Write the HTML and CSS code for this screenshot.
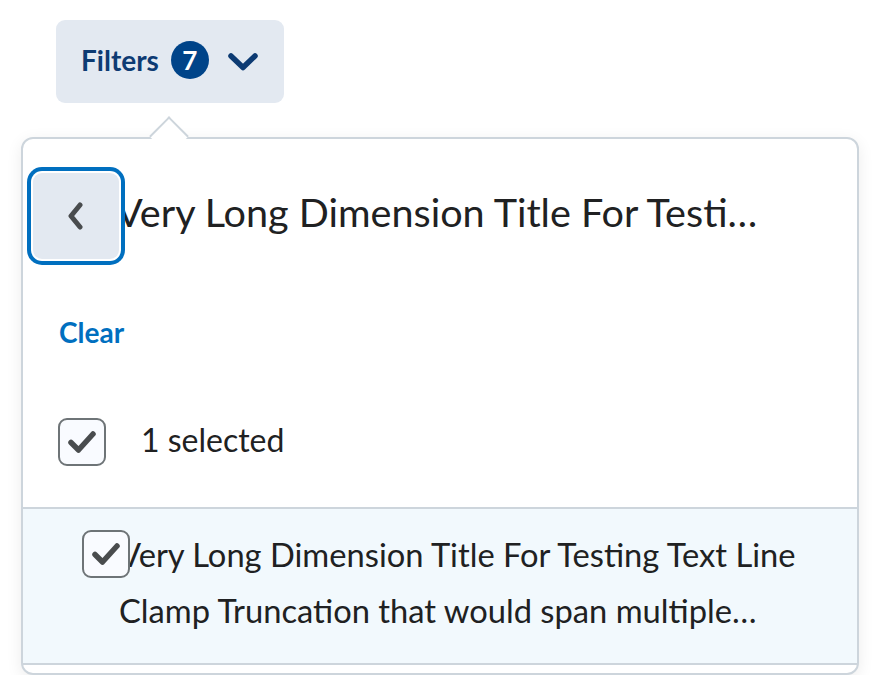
FILE: index.html
```html
<!DOCTYPE html>
<html>
<head>
<meta charset="utf-8">
<link rel="stylesheet" href="styles.css">
</head>
<body>
<div class="page">
  <button class="filters-btn" type="button">
    <span class="filters-label">Filters</span>
    <span class="badge">7</span>
    <svg class="chev-down" width="30" height="18" viewBox="0 0 30 18"><polyline points="3,3 15,14.5 27,3" fill="none" stroke="#0d3b73" stroke-width="5.5" stroke-linecap="round" stroke-linejoin="round"/></svg>
  </button>
  <div class="dropdown">
    <span class="pointer"></span>
    <div class="header">
      <button class="back" type="button">
        <svg width="18" height="28" viewBox="0 0 18 28"><polyline points="13,3 4,14 13,25" fill="none" stroke="#494c4e" stroke-width="5" stroke-linecap="round" stroke-linejoin="round"/></svg>
      </button>
      <div class="title">Very Long Dimension Title For Testing Text Line Clamp Truncation that would span multiple lines</div>
    </div>
    <div class="clear-row"><a class="clear" href="#">Clear</a></div>
    <div class="select-all">
      <span class="checkbox"><svg width="30" height="26" viewBox="0 0 30 26"><polyline points="4,13.5 11.5,21 26,5" fill="none" stroke="#494c4e" stroke-width="5.5" stroke-linecap="round" stroke-linejoin="round"/></svg></span>
      <span class="selected-text">1 selected</span>
    </div>
    <div class="item">
      <span class="checkbox item-check"><svg width="30" height="26" viewBox="0 0 30 26"><polyline points="4,13.5 11.5,21 26,5" fill="none" stroke="#494c4e" stroke-width="5.5" stroke-linecap="round" stroke-linejoin="round"/></svg></span>
      <span class="item-text">Very Long Dimension Title For Testing Text Line Clamp Truncation that would span multiple lines of text in the list</span>
    </div>
  </div>
</div>
</body>
</html>
```

FILE: styles.css
```css
html, body {
  margin: 0;
  padding: 0;
  background: #ffffff;
}
body {
  font-family: Lato, "Noto Sans", sans-serif;
  color: #202122;
}
.page {
  display: flex;
  flex-direction: column;
  align-items: flex-start;
  padding-top: 20px;
}
.filters-btn {
  margin-left: 56px;
  width: 228px;
  height: 83px;
  box-sizing: border-box;
  border: none;
  border-radius: 9px;
  background: #e3e9f1;
  display: flex;
  align-items: center;
  padding: 0 0 3px 25px;
  font-family: Lato, sans-serif;
}
.filters-label {
  font-size: 28px;
  font-weight: 700;
  color: #0d3b73;
}
.badge {
  margin-left: 12px;
  width: 38px;
  height: 38px;
  border-radius: 50%;
  background: #004489;
  color: #ffffff;
  font-size: 26px;
  font-weight: 700;
  display: flex;
  align-items: center;
  justify-content: center;
}
.chev-down {
  margin-left: 19px;
  margin-top: 3px;
  display: block;
}
.dropdown {
  position: relative;
  margin-left: 21px;
  margin-top: 34px;
  width: 838px;
  box-sizing: border-box;
  border: 2px solid #cdd5dc;
  border-radius: 12px;
  background: #ffffff;
  box-shadow: 0 4px 16px rgba(0, 0, 0, 0.08);
  padding-bottom: 8px;
}
.pointer {
  position: absolute;
  left: 132px;
  top: -17px;
  width: 26px;
  height: 26px;
  background: #ffffff;
  border-top: 2px solid #cdd5dc;
  border-left: 2px solid #cdd5dc;
  transform: rotate(45deg);
}
.header {
  display: flex;
  align-items: center;
  padding: 34px 0 0 10px;
}
.back {
  position: relative;
  z-index: 1;
  flex: none;
  width: 86px;
  height: 86px;
  border: none;
  border-radius: 9px;
  background: #e3e9f1;
  box-shadow: 0 0 0 2px #ffffff, 0 0 0 6px #006fbf;
  display: flex;
  align-items: center;
  justify-content: center;
  padding: 0;
}
.title {
  margin-left: -3px;
  width: 652px;
  font-size: 39.6px;
  line-height: 48px;
  white-space: nowrap;
  overflow: hidden;
  text-overflow: ellipsis;
  margin-top: -8px;
}
.clear-row {
  padding: 52px 0 0 36px;
  line-height: 42px;
}
.clear {
  font-size: 28px;
  font-weight: 700;
  color: #006fbf;
  text-decoration: none;
}
.select-all {
  display: flex;
  align-items: center;
  padding: 60px 0 41px 35px;
  border-bottom: 2px solid #cdd5dc;
}
.checkbox {
  flex: none;
  width: 48px;
  height: 48px;
  box-sizing: border-box;
  border: 2px solid #6e7477;
  border-radius: 9px;
  background: #f9fbff;
  display: flex;
  align-items: center;
  justify-content: center;
}
.selected-text {
  margin-left: 35px;
  font-size: 32px;
  line-height: 38px;
  margin-top: -4px;
}
.item {
  display: flex;
  align-items: flex-start;
  background: #f2f9fd;
  border-bottom: 2px solid #cdd5dc;
  padding: 18px 0 24px 59px;
}
.item-check {
  position: relative;
  z-index: 1;
  margin-top: 3px;
}
.item-text {
  margin-left: -11px;
  width: 680px;
  font-size: 32.7px;
  line-height: 56px;
  display: -webkit-box;
  -webkit-box-orient: vertical;
  -webkit-line-clamp: 2;
  overflow: hidden;
}
```
